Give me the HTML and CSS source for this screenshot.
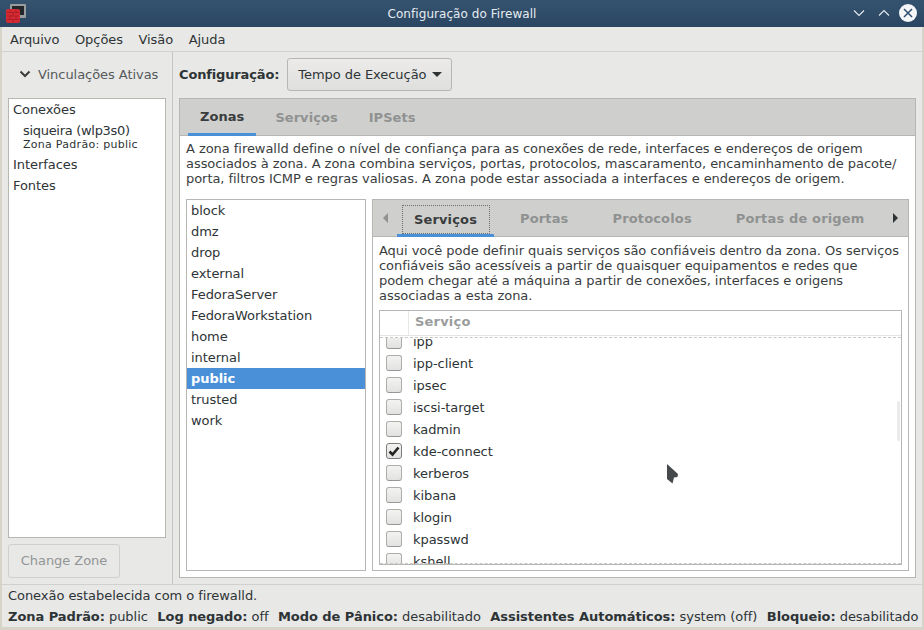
FILE: index.html
```html
<!DOCTYPE html>
<html lang="pt">
<head>
  <meta charset="UTF-8">
  <meta name="viewport" content="width=device-width, initial-scale=1.0">
  <title>Configuração do Firewall</title>
  <link rel="stylesheet" href="styles.css">
</head>
<body>
  <div class="window">
    <header class="titlebar">
      <svg class="app-icon" width="28" height="27" viewBox="0 0 28 27">
        <rect x="10" y="4" width="16" height="14" rx="1" fill="#9a9d9e"/>
        <rect x="12" y="6" width="12" height="9" fill="#23272c"/>
        <rect x="6" y="9" width="14" height="14" rx="2" fill="#d42a34"/>
        <path d="M7 12.500h12M7 16h12M7 19.500h12M10 9.500v3M16 9.500v3M13 12.500V16M10 16v3.500M16 16v3.500M13 19.500v3" stroke="#b01c24" stroke-width="1" fill="none"/>
      </svg>
      <span class="title">Configuração do Firewall</span>
      <div class="win-buttons">
        <svg class="win-min" width="12" height="8" viewBox="0 0 12 8"><path d="M1 1.500 6 6.500 11 1.500" stroke="#e6ebf0" stroke-width="1.100" fill="none"/></svg>
        <svg class="win-max" width="12" height="8" viewBox="0 0 12 8"><path d="M1 6.500 6 1.500 11 6.500" stroke="#e6ebf0" stroke-width="1.100" fill="none"/></svg>
        <svg width="18" height="18" viewBox="0 0 18 18"><circle cx="9" cy="9" r="9" fill="#f4f6f8"/><path d="M5 5 13 13M13 5 5 13" stroke="#2f4c6c" stroke-width="1.500"/></svg>
      </div>
    </header>

    <nav class="menubar">
      <span>Arquivo</span>
      <span>Opções</span>
      <span>Visão</span>
      <span>Ajuda</span>
    </nav>

    <div class="main">
      <aside class="side">
        <div class="expander">
          <svg width="12" height="8" viewBox="0 0 12 8"><path d="M1.500 1.500 6 6 10.500 1.500" stroke="#3a3d3d" stroke-width="2" fill="none"/></svg>
          <span>Vinculações Ativas</span>
        </div>
        <div class="bindings">
          <div class="bind-head">Conexões</div>
          <div class="bind-conn">siqueira (wlp3s0)</div>
          <div class="bind-zone">Zona Padrão: public</div>
          <div class="bind-head bind-if">Interfaces</div>
          <div class="bind-head bind-src">Fontes</div>
        </div>
        <div class="change-zone">Change Zone</div>
      </aside>

      <section class="content">
        <div class="config-row">
          <b>Configuração:</b>
          <div class="combo">Tempo de Execução <i class="caret"></i></div>
        </div>

        <div class="notebook">
          <div class="tabs outer-tabs">
            <span class="tab active">Zonas</span>
            <span class="tab">Serviços</span>
            <span class="tab">IPSets</span>
          </div>
          <div class="page">
            <p class="desc">A zona firewalld define o nível de confiança para as conexões de rede, interfaces e endereços de origem<br>associados à zona. A zona combina serviços, portas, protocolos, mascaramento, encaminhamento de pacote/<br>porta, filtros ICMP e regras valiosas. A zona pode estar associada a interfaces e endereços de origem.</p>
            <div class="zone-area">
              <ul class="zones">
                <li>block</li>
                <li>dmz</li>
                <li>drop</li>
                <li>external</li>
                <li>FedoraServer</li>
                <li>FedoraWorkstation</li>
                <li>home</li>
                <li>internal</li>
                <li class="selected">public</li>
                <li>trusted</li>
                <li>work</li>
              </ul>

              <div class="notebook inner">
                <div class="tabs inner-tabs">
                  <i class="arrow-left"></i>
                  <span class="tab active"><span class="focus">Serviços</span></span>
                  <span class="tab">Portas</span>
                  <span class="tab">Protocolos</span>
                  <span class="tab">Portas de origem</span>
                  <i class="arrow-right"></i>
                </div>
                <div class="page inner-page">
                  <p class="desc">Aqui você pode definir quais serviços são confiáveis dentro da zona. Os serviços<br>confiáveis são acessíveis a partir de quaisquer equipamentos e redes que<br>podem chegar até a máquina a partir de conexões, interfaces e origens<br>associadas a esta zona.</p>
                  <div class="tree">
                    <div class="tree-head"><span class="col-check"></span><span class="col-name">Serviço</span></div>
                    <div class="tree-body">
                      <div class="rows">
                        <div class="row"><i class="check"></i>ipp</div>
                        <div class="row"><i class="check"></i>ipp-client</div>
                        <div class="row"><i class="check"></i>ipsec</div>
                        <div class="row"><i class="check"></i>iscsi-target</div>
                        <div class="row"><i class="check"></i>kadmin</div>
                        <div class="row"><i class="check on"><svg width="12" height="11" viewBox="0 0 12 11"><path d="M1.500 5.500 4.500 8.500 10.500 1.500" stroke="#222" stroke-width="2.600" fill="none"/></svg></i>kde-connect</div>
                        <div class="row"><i class="check"></i>kerberos</div>
                        <div class="row"><i class="check"></i>kibana</div>
                        <div class="row"><i class="check"></i>klogin</div>
                        <div class="row"><i class="check"></i>kpasswd</div>
                        <div class="row"><i class="check"></i>kshell</div>
                      </div>
                      <div class="scroll-thumb"></div>
                      <svg class="pointer" width="12" height="20" viewBox="0 0 12 20"><path d="M0 0 11 10 10.500 13 7 13.500 5.500 19.500 0 15Z" fill="#46494b"/></svg>
                    </div>
                  </div>
                </div>
              </div>
            </div>
          </div>
        </div>
      </section>
    </div>

    <footer class="status">
      <div class="status-msg">Conexão estabelecida com o firewalld.</div>
      <div class="status-line">
        <span><b>Zona Padrão:</b> public</span>
        <span><b>Log negado:</b> off</span>
        <span><b>Modo de Pânico:</b> desabilitado</span>
        <span><b>Assistentes Automáticos:</b> system (off)</span>
        <span><b>Bloqueio:</b> desabilitado</span>
      </div>
    </footer>
  </div>
</body>
</html>
```

FILE: styles.css
```css
body {
  margin: 0;
  width: 924px;
  height: 630px;
  overflow: hidden;
  background-color: #d6d3c8;
  font-family: "DejaVu Sans", sans-serif;
  font-size: 13px;
  letter-spacing: -0.050px;
  color: #2e3436;
}

.window {
  height: 627px;
  margin: 0 2px;
  display: flex;
  flex-direction: column;
  background-color: #e8e8e7;
}

.titlebar {
  height: 27px;
  flex: none;
  margin: 0 -2px;
  display: flex;
  align-items: center;
  justify-content: center;
  position: relative;
  background: linear-gradient(#35536f, #2a4561);
  color: #e6ebf0;
  font-size: 12px;
  letter-spacing: 0.060px;
}

.app-icon {
  position: absolute;
  left: 0;
  top: 0;
}

.win-buttons {
  position: absolute;
  right: 7px;
  top: 4px;
  display: flex;
  align-items: center;
}

.win-min {
  margin-right: 13px;
}

.win-max {
  margin-right: 9px;
}

.menubar {
  height: 24px;
  flex: none;
  display: flex;
  align-items: center;
  gap: 15.500px;
  padding-left: 8px;
  border-bottom: 1px solid #d0d0ce;
}

.main {
  flex: 1;
  display: flex;
  min-height: 0;
}

.side {
  width: 171px;
  flex: none;
  box-sizing: border-box;
  border-right: 1px solid #c5c5c3;
  padding: 0 6px;
  display: flex;
  flex-direction: column;
}

.expander {
  height: 44px;
  flex: none;
  margin-bottom: 2px;
  display: flex;
  align-items: center;
  gap: 7px;
  padding-left: 11px;
  color: #555a5b;
}

.bindings {
  height: 440px;
  flex: none;
  box-sizing: border-box;
  background-color: #fff;
  border: 1px solid #b6b6b3;
  padding: 2px 4px;
}

.bind-head {
  line-height: 17px;
}

.bind-conn {
  line-height: 15px;
  margin-top: 5px;
  padding-left: 10px;
  letter-spacing: -0.300px;
}

.bind-zone {
  font-size: 11px;
  line-height: 14px;
  padding-left: 10px;
  letter-spacing: 0.280px;
}

.bind-if {
  margin-top: 4px;
}

.bind-src {
  margin-top: 4px;
}

.change-zone {
  width: 112px;
  height: 34px;
  flex: none;
  box-sizing: border-box;
  margin-top: 6px;
  border: 1px solid #cfcfcc;
  border-radius: 3px;
  background-color: #e8e8e7;
  color: #929595;
  text-align: center;
  line-height: 32px;
}

.content {
  flex: 1;
  padding: 6px 0 0 6px;
  min-width: 0;
}

.config-row {
  height: 33px;
  display: flex;
  align-items: center;
  gap: 8px;
  margin-bottom: 7px;
}

.config-row b {
  letter-spacing: -0.150px;
}

.combo {
  width: 165px;
  height: 33px;
  box-sizing: border-box;
  padding-left: 10px;
  border: 1px solid #b6b6b3;
  border-radius: 3px;
  background: linear-gradient(#ecebea, #dfdfdd);
  line-height: 31px;
}

.caret {
  display: inline-block;
  margin-left: 1px;
  vertical-align: 2px;
  border-left: 5px solid transparent;
  border-right: 5px solid transparent;
  border-top: 5px solid #2e3436;
}

.notebook {
  height: 480px;
  width: 737px;
  box-sizing: border-box;
  border: 1px solid #b6b6b3;
  display: flex;
  flex-direction: column;
  background-color: #fff;
}

.tabs {
  height: 37px;
  flex: none;
  box-sizing: border-box;
  display: flex;
  background-color: #cfcfcd;
  border-bottom: 1px solid #b6b6b3;
  font-weight: bold;
  color: #8f9291;
}

.tab {
  height: 37px;
  box-sizing: border-box;
  display: flex;
  align-items: center;
  justify-content: center;
}

.tab.active {
  color: #3a3d3e;
  border-bottom: 3px solid #4a90d9;
}

.outer-tabs {
  padding-left: 8px;
  letter-spacing: 0.050px;
}

.outer-tabs .tab {
  padding: 0 12px;
  margin-right: 7px;
}

.page {
  flex: 1;
  min-height: 0;
  padding: 5px 6px 0 6px;
  display: flex;
  flex-direction: column;
}

.desc {
  margin: 0;
  line-height: 15px;
  color: #3a3d3e;
}

.zone-area {
  margin-top: 13px;
  height: 372px;
  display: flex;
  gap: 6px;
}

.zones {
  width: 180px;
  flex: none;
  box-sizing: border-box;
  margin: 0;
  padding: 0;
  list-style: none;
  border: 1px solid #b6b6b3;
}

.zones li {
  height: 21px;
  line-height: 21px;
  padding-left: 4px;
}

.zones .selected {
  background-color: #4a90d9;
  color: #fff;
  font-weight: bold;
}

.notebook.inner {
  height: 372px;
  width: 537px;
}

.inner-tabs {
  letter-spacing: 0.150px;
}

.inner-tabs .tab {
  padding: 0 22px;
}

.inner-tabs .tab.active {
  width: 97px;
  padding: 0;
  margin: 0 4px 0 9px;
}

.focus {
  width: 88px;
  height: 29px;
  box-sizing: border-box;
  border: 1px dotted #6e6e6e;
  display: flex;
  align-items: center;
  justify-content: center;
  margin-top: 4px;
}

.arrow-left, .arrow-right {
  align-self: center;
  width: 0;
  height: 0;
  border-top: 5px solid transparent;
  border-bottom: 5px solid transparent;
}

.arrow-left {
  margin-left: 10px;
  border-right: 5px solid #8f9291;
}

.arrow-right {
  margin-left: 7px;
  border-left: 5px solid #2e3436;
}

.inner-page {
  padding-top: 6px;
}

.tree {
  margin-top: 7px;
  height: 255px;
  flex: none;
  box-sizing: border-box;
  border: 1px solid #b6b6b3;
  display: flex;
  flex-direction: column;
}

.tree-head {
  height: 24px;
  flex: none;
  display: flex;
  border-bottom: 1px solid #e4e4e2;
  font-weight: bold;
  color: #9a9d9c;
  letter-spacing: 0.200px;
  line-height: 22px;
}

.col-check {
  width: 28px;
  border-right: 1px solid #e8e8e6;
}

.col-name {
  padding-left: 6px;
}

.tree-body {
  flex: 1;
  min-height: 0;
  overflow: hidden;
  position: relative;
  border-top: 1px dashed #c8c8c6;
  margin-top: 1px;
}

.tree-body::after {
  content: "";
  position: absolute;
  left: 0;
  right: 0;
  bottom: 0;
  border-bottom: 1px dashed #c8c8c6;
}

.rows {
  margin-top: -8px;
}

.row {
  height: 22px;
  display: flex;
  align-items: center;
  color: #2e3436;
}

.check {
  width: 14px;
  height: 14px;
  flex: none;
  margin: 0 11px 0 6px;
  display: flex;
  align-items: center;
  justify-content: center;
  border: 1px solid #adadaa;
  border-bottom-color: #979795;
  border-radius: 3px;
  background: linear-gradient(#f3f3f2, #e2e2e0);
}

.check.on {
  border-color: #7d7d7b;
}

.scroll-thumb {
  position: absolute;
  right: 1px;
  top: 63px;
  width: 3px;
  height: 40px;
  border-radius: 2px;
  background-color: #eaeaea;
}

.pointer {
  position: absolute;
  left: 287px;
  top: 126px;
}

.status {
  height: 42px;
  flex: none;
  border-top: 1px solid #d0d0ce;
  padding-left: 6px;
}

.status-msg {
  line-height: 21px;
}

.status-line {
  display: flex;
  gap: 9.500px;
  line-height: 21px;
  white-space: nowrap;
}
```
